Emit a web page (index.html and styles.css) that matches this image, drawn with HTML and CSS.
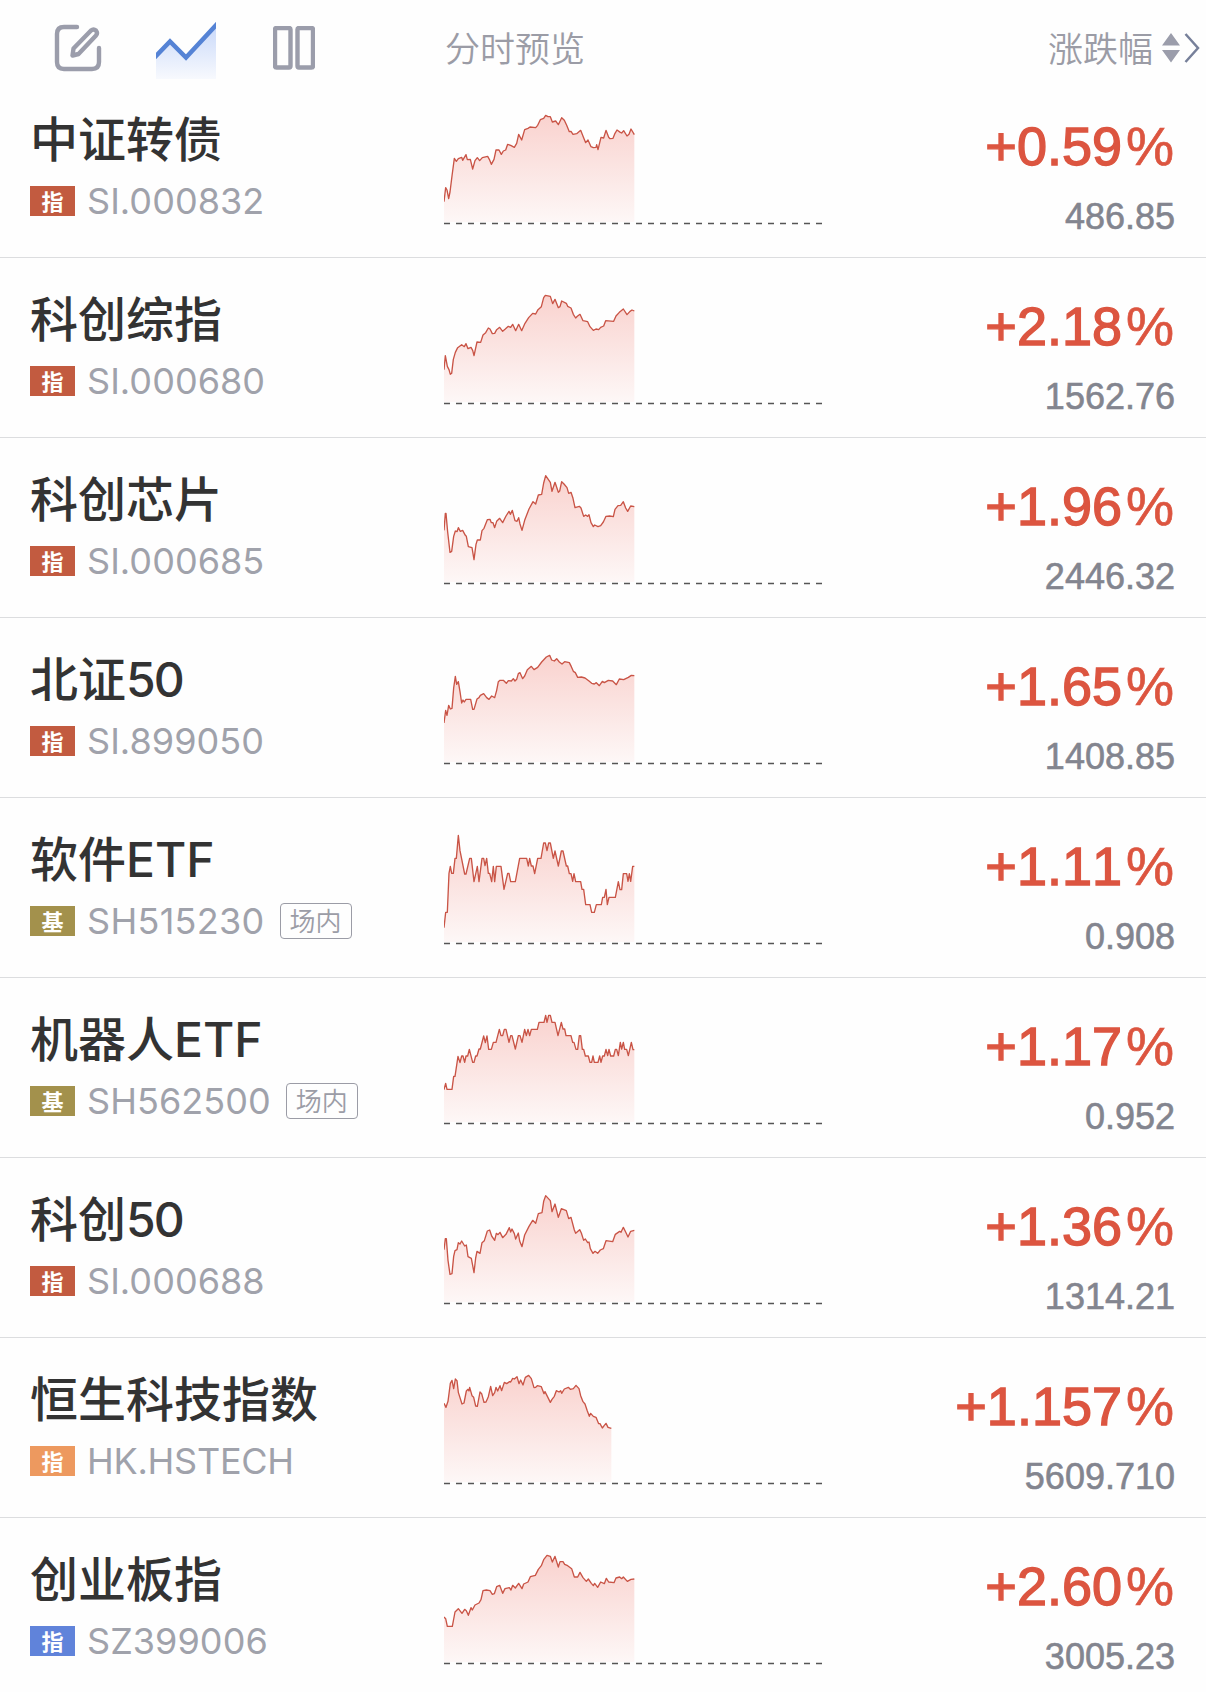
FILE: index.html
```html
<!DOCTYPE html>
<html lang="zh-CN">
<head>
<meta charset="utf-8">
<title>自选行情</title>
<link rel="stylesheet" href="styles.css">
</head>
<body>
<svg class="defs" width="0" height="0" aria-hidden="true">
  <defs>
    <linearGradient id="area" gradientUnits="userSpaceOnUse" x1="0" y1="45" x2="0" y2="366">
      <stop offset="0" stop-color="#ec5546" stop-opacity=".26"/>
      <stop offset="1" stop-color="#ec5546" stop-opacity=".04"/>
    </linearGradient>
    <linearGradient id="blue" x1="0" y1="0" x2="0" y2="1">
      <stop offset="0" stop-color="#5b8bf0" stop-opacity=".32"/>
      <stop offset="1" stop-color="#5b8bf0" stop-opacity=".04"/>
    </linearGradient>
  </defs>
</svg>
<header class="bar">
  <div class="tools">
    <svg class="ico-edit" viewBox="0 0 48 48" width="48" height="48"><path d="M23 3H10Q3 3 3 10V38Q3 45 10 45H38Q45 45 45 38V24"/><path d="M18.500 31.500 19.500 24.500 37 6.500Q39.500 4.500 42 6.500 44 9 42 11.500L24.500 30Z"/></svg>
    <svg class="ico-trend" viewBox="0 0 60 58" width="60" height="58"><path fill="url(#blue)" d="M0 35 14 20 30 36 60 4V57H0Z"/><path class="stroke" d="M-2 36 14 19.500 30 35.500 62 1"/></svg>
    <svg class="ico-cols" viewBox="0 0 42 44" width="42" height="44"><rect x="2" y="2" width="15.500" height="39.500" rx="1.500"/><rect x="24.500" y="2" width="15.500" height="39.500" rx="1.500"/></svg>
  </div>
  <div class="preview">分时预览</div>
  <div class="sort">涨跌幅
    <svg class="ico-sort" viewBox="0 0 18 30" width="18" height="30"><path d="M9 0 18 12.500H0ZM9 29.500 18 17H0Z"/></svg>
    <svg class="ico-next" viewBox="0 0 16 32" width="16" height="32"><path d="M1.500 2 14 16 1.500 30"/></svg>
  </div>
</header>
<main>
  <section class="row">
    <div class="info"><h2>中证转债</h2><div class="meta"><i class="badge red">指</i><span class="code">SI.000832</span></div></div>
    <svg class="chart" viewBox="42 36 1140 360"><path class="line" d="M42 305L47 263 51 270 56 296 60 276 66 228 73 175 79 184 85 176 95 172 98 181 108 164 112 179 121 178 128 207 135 182 142 173 149 182 157 173 173 169 178 178 184 193 192 178 198 150 207 150 214 163 220 153 227 150 233 133 242 136 253 142 260 130 266 103 275 120 284 89 294 85 300 81 317 83 323 76 331 59 341 55 347 46 354 50 361 50 367 66 377 63 385 74 395 53 403 61 410 76 418 95 423 94 429 103 440 101 452 91 460 111 467 128 474 120 483 140 490 143 498 142 500 134 504 149 513 112 521 114 528 91 536 112 540 116 549 115 555 100 561 90 571 97 575 99 581 92 591 108 597 103 603 87 613 104"/><path class="base" d="M42 370.500H1176"/></svg>
    <div class="quote"><b>+0.59<i>%</i></b><span>486.85</span></div>
  </section>
  <section class="row">
    <div class="info"><h2>科创综指</h2><div class="meta"><i class="badge red">指</i><span class="code">SI.000680</span></div></div>
    <svg class="chart" viewBox="42 36 1140 360"><path class="line" d="M42 269L46 227 52 259 57 269 61 283 65 280 70 238 76 217 83 203 95 194 103 200 108 191 114 206 123 202 128 211 132 227 141 186 152 187 159 165 167 158 175 144 180 147 187 161 194 160 200 149 209 142 218 154 225 148 235 139 242 142 248 133 257 152 266 133 275 152 285 130 296 113 308 100 317 102 324 89 334 80 341 53 346 46 361 49 368 71 375 58 385 83 390 80 395 63 409 70 413 79 423 84 430 103 437 114 442 109 450 103 459 122 473 125 480 140 490 151 498 147 506 149 512 142 521 138 527 122 551 124 558 108 568 97 580 87 591 104 600 94 606 90 613 93"/><path class="base" d="M42 370.500H1176"/></svg>
    <div class="quote"><b>+2.18<i>%</i></b><span>1562.76</span></div>
  </section>
  <section class="row">
    <div class="info"><h2>科创芯片</h2><div class="meta"><i class="badge red">指</i><span class="code">SI.000685</span></div></div>
    <svg class="chart" viewBox="42 36 1140 360"><path class="line" d="M42 211L46 160 48 160 53 216 60 277 65 274 71 229 76 213 81 215 85 203 91 214 98 211 106 226 109 229 115 260 126 263 132 299 138 253 142 240 151 240 156 212 162 205 172 179 180 178 184 188 189 188 194 203 200 184 209 175 218 188 228 168 237 154 241 163 247 151 255 182 261 184 266 173 270 192 276 211 284 181 297 147 309 125 317 132 325 105 335 103 341 69 347 47 361 67 366 94 375 67 385 97 389 93 395 65 402 72 411 83 416 100 423 97 429 115 435 143 448 139 453 144 461 169 467 165 473 169 477 164 483 188 490 200 494 195 504 200 512 197 520 186 528 169 539 168 550 170 555 148 564 137 572 136 580 125 587 144 593 154 602 138 613 140"/><path class="base" d="M42 370.500H1176"/></svg>
    <div class="quote"><b>+1.96<i>%</i></b><span>2446.32</span></div>
  </section>
  <section class="row">
    <div class="info"><h2>北证<span class="num">50</span></h2><div class="meta"><i class="badge red">指</i><span class="code">SI.899050</span></div></div>
    <svg class="chart" viewBox="42 36 1140 360"><path class="line" d="M42 249L47 211 51 226 56 196 61 207 66 205 71 144 76 109 80 133 85 125 90 155 95 189 99 180 103 186 108 178 122 178 128 208 132 208 141 177 147 173 151 166 161 161 170 173 177 178 185 168 194 173 200 151 205 125 210 121 220 121 229 130 235 122 244 123 250 116 255 123 260 118 265 101 270 98 278 116 284 108 292 89 304 79 312 89 323 82 335 66 349 51 359 46 365 60 373 63 380 56 388 66 396 72 404 65 418 68 424 80 430 94 436 98 443 112 454 111 465 114 478 124 485 130 493 132 499 128 508 137 517 124 523 128 535 121 548 123 559 134 568 117 581 119 595 112 604 106 613 107"/><path class="base" d="M42 370.500H1176"/></svg>
    <div class="quote"><b>+1.65<i>%</i></b><span>1408.85</span></div>
  </section>
  <section class="row">
    <div class="info"><h2>软件<span>ETF</span></h2><div class="meta"><i class="badge gold">基</i><span class="code wide">SH515230</span><span class="tag">场内</span></div></div>
    <svg class="chart" viewBox="42 36 1140 360"><path class="line" d="M42 323L47 277H52L57 160 61 139 65 160H70L75 115H79L85 46 90 92 104 162H108L119 115H124L132 185 142 139 147 185 156 115H161L165 137 170 115 175 160H179L185 185 190 139 194 185 199 139H213L222 208 233 160H237L242 185H256L269 115H290L295 138 299 115 304 138H309L314 161 323 115H333L341 69H346L351 92 356 69H361L370 115 375 93 385 138 394 93H399L409 138H413L418 161H423L428 184 432 161 437 185H452L456 208H461L467 254H480L485 277H493L499 254H514L518 232H523L528 208 532 254 537 232H556L565 185 570 209H575L580 161H590L594 184 598 161 602 184 608 139H613"/><path class="base" d="M42 370.500H1176"/></svg>
    <div class="quote"><b>+1.11<i>%</i></b><span>0.908</span></div>
  </section>
  <section class="row">
    <div class="info"><h2>机器人<span>ETF</span></h2><div class="meta"><i class="badge gold">基</i><span class="code">SH562500</span><span class="tag">场内</span></div></div>
    <svg class="chart" viewBox="42 36 1140 360"><path class="line" d="M42 269L47 250 51 268H66L71 229H75L84 169 90 188 95 168H99L104 187 108 168H113L118 148 128 187H132L137 168H141L147 147H151L161 108 166 128 171 108 176 148H184L190 127H198L208 88 213 107H218L223 88H228L237 127 242 107H246L256 147 265 107H270L276 127 284 88 289 107 294 88 299 107 304 88H322L327 67H342L347 46 351 67 356 46H361L366 67H375L384 107 394 67 399 87H404L408 107H423L428 127H432L438 148H443L448 107H452L457 148H461L466 168H475L480 187H485L489 168 493 187H504L509 168 513 187 518 168H523L528 148 533 167 537 148 542 168H551L556 148H560L565 167 571 127 575 147 580 127 584 148H590L595 167 604 127 609 149H613"/><path class="base" d="M42 370.500H1176"/></svg>
    <div class="quote"><b>+1.17<i>%</i></b><span>0.952</span></div>
  </section>
  <section class="row">
    <div class="info"><h2>科创<span class="num">50</span></h2><div class="meta"><i class="badge red">指</i><span class="code">SI.000688</span></div></div>
    <svg class="chart" viewBox="42 36 1140 360"><path class="line" d="M42 209L46 176H49L54 241 60 283 66 281 71 229 75 212 81 209 85 188 90 192 95 183 104 198 109 195 114 230 124 235 132 278 137 234 141 214 150 220 156 188 163 182 172 153 179 150 185 168 194 181 199 160 204 164 210 157 218 173 228 163 238 143 242 156 246 147 253 161 257 177 265 159 269 183 276 200 284 165 297 139 308 121 317 130 325 101 336 98 341 64 347 47 361 62 366 95 375 72 385 112 394 86 409 92 416 116 423 112 433 150 437 160 449 149 454 159 461 181 466 177 473 188 477 186 481 206 489 220 495 214 503 220 511 210 520 206 528 182 548 185 556 163 569 154 573 157 580 142 587 156 594 171 602 154 613 151"/><path class="base" d="M42 370.500H1176"/></svg>
    <div class="quote"><b>+1.36<i>%</i></b><span>1314.21</span></div>
  </section>
  <section class="row">
    <div class="info"><h2>恒生科技指数</h2><div class="meta"><i class="badge orange">指</i><span class="code alpha">HK.HSTECH</span></div></div>
    <svg class="chart" viewBox="42 36 1140 360"><path class="line" d="M42 130L48 142 54 124 61 70 66 61 71 86 76 57 81 62 85 97 96 132 102 129 109 93 114 88 117 93 119 82 126 107 131 112 137 138 142 139 150 96 155 101 162 127 168 126 175 110 182 79 188 107 194 98 198 82 203 93 210 77 215 92 223 67 230 71 239 65 242 66 248 55 253 57 261 50 267 71 272 60 279 75 286 52 296 46 304 56 312 83 317 82 322 77 334 80 342 101 345 95 354 113 361 127 366 118 373 109 379 92 387 96 392 92 395 100 403 87 415 82 421 88 430 86 438 76 447 86 452 107 459 125 465 132 472 153 478 169 482 160 490 169 498 172 506 191 510 191 517 204 523 196 528 190 534 202 544 205"/><path class="base" d="M42 370.500H1176"/></svg>
    <div class="quote"><b>+1.157<i>%</i></b><span>5609.710</span></div>
  </section>
  <section class="row">
    <div class="info"><h2>创业板指</h2><div class="meta"><i class="badge blue">指</i><span class="code">SZ399006</span></div></div>
    <svg class="chart" viewBox="42 36 1140 360"><path class="line" d="M42 231L47 236 52 259H67L75 216 85 206 96 220 104 208 109 212 115 226 123 203 127 210 135 195 147 189 153 179 159 152 169 150 180 152 187 163 193 161 200 140 209 136 218 160 225 146 238 143 243 150 248 136 256 144 266 130 276 146 281 132 294 126 301 110 316 106 325 88 334 77 341 59 351 46 361 49 367 66 375 49 385 81 390 65 399 65 404 73 413 77 421 83 425 86 433 111 443 111 450 97 459 113 469 124 475 117 484 130 490 137 494 130 503 142 512 126 523 131 529 115 536 126 552 128 558 114 569 111 575 116 580 111 592 124 603 118 613 117"/><path class="base" d="M42 370.500H1176"/></svg>
    <div class="quote"><b>+2.60<i>%</i></b><span>3005.23</span></div>
  </section>
</main>
<script src="charts.js"></script>
</body>
</html>
```
FILE: charts.js
```js
// Adds the shaded area under each price line, down to the baseline.
document.querySelectorAll('.chart .line').forEach(function (line) {
  var area = line.cloneNode();
  area.setAttribute('class', 'fill');
  area.setAttribute('d', line.getAttribute('d') + 'V366H42Z');
  line.before(area);
});
```
FILE: styles.css
```css
* { box-sizing: border-box; }
html { overflow: hidden; }
body {
  margin: 0;
  width: 1206px;
  height: 1692px;
  overflow: hidden;
  background: #fefefe;
  font-family: Inter, "Noto Sans CJK SC", sans-serif;
  color: #333;
}
.defs { display: block; height: 0; }
svg { flex: none; }
i { font-style: normal; }

.bar {
  display: grid;
  grid-template-columns: 444px 1fr auto;
  height: 78px;
  padding-right: 6px;
  color: #9b9ca6;
  font: 350 35px/50px "Noto Sans CJK SC", sans-serif;
}
.tools { display: flex; padding-left: 54px; align-items: flex-start; }
.ico-edit { margin-top: 24px; }
.ico-trend { margin: 22px 57px 0 54px; }
.ico-cols { margin-top: 26px; }
.ico-edit path, .ico-cols rect {
  fill: none;
  stroke: #9b9dab;
  stroke-width: 4.4;
  stroke-linecap: round;
  stroke-linejoin: round;
}
.ico-trend .stroke { fill: none; stroke: #5583d5; stroke-width: 4.5; }
.preview { padding: 22px 0 0 1px; }
.sort { display: flex; padding-top: 22px; }
.ico-sort { margin: 11px 4px 0 9px; fill: #9b9dab; }
.ico-next { margin-top: 10px; fill: none; stroke: #77809a; }
.ico-next path { stroke-width: 2.5; }

.row {
  display: grid;
  grid-template-columns: 444px 380px 1fr;
  height: 180px;
  padding-right: 32px;
  border-bottom: 1px solid #dcdddf;
}
.info { padding: 28px 0 0 30px; }
h2 {
  margin: 0;
  height: 60px;
  font: 500 48px/60px "Noto Sans CJK SC", sans-serif;
  white-space: nowrap;
}
h2 span {
  font-family: Inter, sans-serif;
  line-height: 1;
}
h2 .num { letter-spacing: -2px; }
.meta { display: flex; align-items: center; height: 36px; margin-top: 17px; }
.badge {
  width: 45px;
  height: 30px;
  color: #fff;
  font: 700 22px/28px "Noto Sans CJK SC", sans-serif;
  text-align: center;
}
.red { background: #c25b40; }
.gold { background: #a3914c; }
.orange { background: #ed995f; }
.blue { background: #6083da; }
.code {
  margin-left: 12px;
  color: #a0a2ab;
  font-size: 36px;
  font-weight: 400;
  line-height: 36px;
  letter-spacing: .05px;
}
.code.wide { letter-spacing: .3px; }
.code.alpha { letter-spacing: -.25px; }
.tag {
  width: 72px;
  height: 36px;
  margin-left: 15px;
  border: 1px solid #9b9ca6;
  border-radius: 4px;
  color: #9b9ca6;
  font: 350 26px/32px "Noto Sans CJK SC", sans-serif;
  text-align: center;
}
.chart { width: 380px; height: 120px; margin-top: 34px; }
.chart .fill { fill: url(#area); }
.chart .line { fill: none; stroke: #c95446; stroke-width: 4; stroke-linejoin: round; }
.chart .base { fill: none; stroke: #555; stroke-width: 4; stroke-dasharray: 18 18; }
.quote {
  display: flex;
  flex-direction: column;
  align-items: flex-end;
  padding-top: 38px;
  font-family: "Liberation Sans", sans-serif;
  font-kerning: none;
}
.quote b {
  color: #dc5540;
  font-size: 54px;
  font-weight: 400;
  line-height: 60px;
  -webkit-text-stroke: 1.4px #dc5540;
}
.quote b i { margin-left: 4px; -webkit-text-stroke-width: .7px; }
.quote span {
  margin: 21px -1px 0 0;
  color: #83858f;
  font-size: 36px;
  line-height: 40px;
  -webkit-text-stroke: .6px #83858f;
}
```
